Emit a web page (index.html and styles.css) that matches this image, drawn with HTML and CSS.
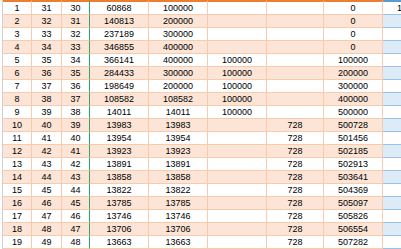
FILE: index.html
```html
<!DOCTYPE html>
<html lang="en">
<head>
    <meta charset="UTF-8">
    <title>Sheet</title>
    <link rel="stylesheet" href="styles.css">
</head>
<body>
    <div class="sheet">
        <div class="gutter"></div>
        <table class="grid">
            <colgroup>
                <col class="c-a"><col class="c-b"><col class="c-c"><col class="c-d"><col class="c-e">
                <col class="c-f"><col class="c-g"><col class="c-h"><col class="c-i">
            </colgroup>
            <tbody id="rows"></tbody>
        </table>
    </div>

    <script>
        let data = [
            [1, 31, 30, 60868, 100000, '', '', 0, 100000],
            [2, 32, 31, 140813, 200000, '', '', 0, ''],
            [3, 33, 32, 237189, 300000, '', '', 0, ''],
            [4, 34, 33, 346855, 400000, '', '', 0, ''],
            [5, 35, 34, 366141, 400000, 100000, '', 100000, ''],
            [6, 36, 35, 284433, 300000, 100000, '', 200000, ''],
            [7, 37, 36, 198649, 200000, 100000, '', 300000, ''],
            [8, 38, 37, 108582, 108582, 100000, '', 400000, ''],
            [9, 39, 38, 14011, 14011, 100000, '', 500000, ''],
            [10, 40, 39, 13983, 13983, '', 728, 500728, ''],
            [11, 41, 40, 13954, 13954, '', 728, 501456, ''],
            [12, 42, 41, 13923, 13923, '', 728, 502185, ''],
            [13, 43, 42, 13891, 13891, '', 728, 502913, ''],
            [14, 44, 43, 13858, 13858, '', 728, 503641, ''],
            [15, 45, 44, 13822, 13822, '', 728, 504369, ''],
            [16, 46, 45, 13785, 13785, '', 728, 505097, ''],
            [17, 47, 46, 13746, 13746, '', 728, 505826, ''],
            [18, 48, 47, 13706, 13706, '', 728, 506554, ''],
            [19, 49, 48, 13663, 13663, '', 728, 507282, '']
        ];

        let body = document.getElementById('rows');
        data.forEach(row => {
            let tr = document.createElement('tr');
            row.forEach((val, i) => {
                let td = document.createElement('td');
                td.textContent = val;
                if (i === 2) td.className = 'split';
                if (i === 8) td.className = 'side';
                tr.appendChild(td);
            });
            body.appendChild(tr);
        });
    </script>
</body>
</html>
```

FILE: styles.css
```css
body {
    margin: 0;
    overflow: hidden;
    background: #fff;
    font-family: "Liberation Sans", Arial, sans-serif;
    font-size: 9px;
    color: #000;
}
.sheet {
    display: flex;
    align-items: flex-start;
}
.gutter {
    width: 2px;
    height: 249px;
    flex: none;
    border-right: 1px solid #d0d0d0;
}
.grid {
    border-collapse: separate;
    border-spacing: 0;
    table-layout: fixed;
    width: 439px;
    flex: none;
}
.c-a { width: 29px; }
.c-b { width: 30px; }
.c-c { width: 28px; }
.c-d { width: 59px; }
.c-e { width: 59px; }
.c-f { width: 59px; }
.c-g { width: 57px; }
.c-h { width: 59px; }
.c-i { width: 59px; }
td {
    height: 12px;
    padding: 0;
    line-height: 12px;
    text-align: center;
    white-space: nowrap;
    overflow: hidden;
    border-right: 1px solid #f8cbad;
    border-bottom: 1px solid #f8cbad;
}
tr:first-child td {
    border-top: 2px solid #ed7d31;
}
tr:nth-child(even) td {
    background: #fce4d6;
}
td.split {
    border-right-color: #33a36a;
}
td.side {
    border-bottom-color: #9bc2e6;
}
tr:first-child td.side {
    border-top-color: #5b9bd5;
}
tr:nth-child(even) td.side {
    background: #ddebf7;
}
```
